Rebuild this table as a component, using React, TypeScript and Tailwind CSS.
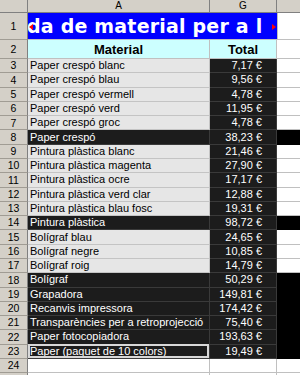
import React from "react";

type Row = { n: number; name: string; total: string; dark: boolean };

const rows: Row[] = [
  { n: 3, name: "Paper crespó blanc", total: "7,17 €", dark: false },
  { n: 4, name: "Paper crespó blau", total: "9,56 €", dark: false },
  { n: 5, name: "Paper crespó vermell", total: "4,78 €", dark: false },
  { n: 6, name: "Paper crespó verd", total: "11,95 €", dark: false },
  { n: 7, name: "Paper crespó groc", total: "4,78 €", dark: false },
  { n: 8, name: "Paper crespó", total: "38,23 €", dark: true },
  { n: 9, name: "Pintura plàstica blanc", total: "21,46 €", dark: false },
  { n: 10, name: "Pintura plàstica magenta", total: "27,90 €", dark: false },
  { n: 11, name: "Pintura plàstica ocre", total: "17,17 €", dark: false },
  { n: 12, name: "Pintura plàstica verd clar", total: "12,88 €", dark: false },
  { n: 13, name: "Pintura plàstica blau fosc", total: "19,31 €", dark: false },
  { n: 14, name: "Pintura plàstica", total: "98,72 €", dark: true },
  { n: 15, name: "Bolígraf blau", total: "24,65 €", dark: false },
  { n: 16, name: "Bolígraf negre", total: "10,85 €", dark: false },
  { n: 17, name: "Bolígraf roig", total: "14,79 €", dark: false },
  { n: 18, name: "Bolígraf", total: "50,29 €", dark: true },
  { n: 19, name: "Grapadora", total: "149,81 €", dark: true },
  { n: 20, name: "Recanvis impressora", total: "174,42 €", dark: true },
  { n: 21, name: "Transparències per a retroprojecció", total: "75,40 €", dark: true },
  { n: 22, name: "Paper fotocopiadora", total: "193,63 €", dark: true },
  { n: 23, name: "Paper (paquet de 10 colors)", total: "19,49 €", dark: true },
];

const RowHead = ({ label }: { label?: React.ReactNode }) => (
  <div className="w-[28px] shrink-0 h-full flex items-center justify-center bg-[#d4d0c8] border-r border-b border-r-[#808080] border-b-[#a09c94] text-[10.5px] leading-none text-black">
    {label}
  </div>
);

export default function App() {
  return (
    <div
      className="w-[300px] h-[375px] overflow-hidden bg-white select-none"
      style={{ fontFamily: '"Liberation Sans", Arial, sans-serif' }}
    >
      {/* column header */}
      <div className="flex h-[13px]">
        <div className="w-[28px] shrink-0 bg-[#d4d0c8] border-r border-b border-[#808080]" />
        <div className="w-[182px] shrink-0 bg-[#d4d0c8] border-r border-b border-[#808080] flex items-center justify-center text-[10px] leading-none">A</div>
        <div className="w-[67px] shrink-0 bg-[#d4d0c8] border-r border-b border-[#808080] flex items-center justify-center text-[10px] leading-none">G</div>
        <div className="flex-1 bg-[#d4d0c8] border-b border-[#808080]" />
      </div>

      {/* row 1 title */}
      <div className="flex h-[27px]">
        <RowHead label="1" />
        <div className="relative w-[249px] shrink-0 h-full bg-[#0000ff] border-b border-[#c0c0c0] overflow-hidden flex items-center">
          <span
            className="whitespace-nowrap text-white font-bold text-[19px] leading-none ml-[-1px] tracking-[0.2px]"
            style={{ fontFamily: '"DejaVu Sans", sans-serif' }}
          >
            da de material per a l
          </span>
          <div className="absolute left-[1px] top-[11px] w-0 h-0 border-t-[3px] border-b-[3px] border-r-[4px] border-t-transparent border-b-transparent border-r-[#ff0000]" />
          <div className="absolute right-[1px] top-[11px] w-0 h-0 border-t-[3px] border-b-[3px] border-l-[4px] border-t-transparent border-b-transparent border-l-[#ff0000]" />
        </div>
        <div className="flex-1 border-l border-b border-[#c0c0c0]" />
      </div>

      {/* row 2 headers */}
      <div className="flex h-[19px]">
        <RowHead label="2" />
        <div className="w-[182px] shrink-0 bg-[#ccffff] border-r border-b border-[#c0c0c0] flex items-center justify-center font-bold text-[13px] leading-none">Material</div>
        <div className="w-[67px] shrink-0 bg-[#ccffff] border-r border-b border-[#c0c0c0] flex items-center justify-center font-bold text-[13px] leading-none">Total</div>
        <div className="flex-1 border-b border-[#c0c0c0]" />
      </div>

      {rows.map((r) => (
        <div key={r.n} className="flex h-[14.286px]">
          <RowHead label={r.n} />
          <div
            className={
              r.dark
                ? "relative w-[182px] shrink-0 h-full bg-[#1c1c1c] border-r border-b border-[#3a3a3a] text-white text-[11px] leading-none flex items-center pl-[2px] whitespace-nowrap"
                : "w-[182px] shrink-0 h-full bg-[#e6e6e6] border-r border-b border-[#c4c4c4] text-black text-[11px] leading-none flex items-center pl-[2px] whitespace-nowrap"
            }
          >
            {r.name}
            {r.n === 23 && (
              <div className="absolute inset-0 -top-[1px] border-2 border-[#d8d8d8]" />
            )}
          </div>
          <div className="w-[67px] shrink-0 h-full bg-[#1c1c1c] border-r border-b border-[#3a3a3a] text-white text-[11px] leading-none flex items-center justify-end pr-[14px] whitespace-nowrap">
            {r.total}
          </div>
          <div className={r.dark ? "flex-1 h-full bg-black" : "flex-1 h-full bg-white border-b border-[#c0c0c0]"} />
        </div>
      ))}

      {/* row 24 */}
      <div className="flex h-[14.286px]">
        <RowHead label="24" />
        <div className="w-[182px] shrink-0 h-full border-r border-b border-[#c0c0c0]" />
        <div className="w-[67px] shrink-0 h-full border-r border-b border-[#c0c0c0]" />
        <div className="flex-1 h-full border-b border-[#c0c0c0]" />
      </div>
      <div className="flex h-[14px]">
        <RowHead />
        <div className="w-[182px] shrink-0 h-full border-r border-[#c0c0c0]" />
        <div className="w-[67px] shrink-0 h-full border-r border-[#c0c0c0]" />
      </div>
    </div>
  );
}
